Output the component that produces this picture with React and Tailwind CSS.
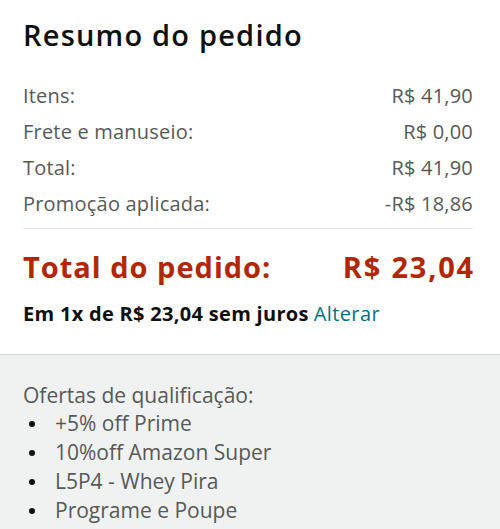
export default function App() {
  const rows = [
    ["Itens:", "R$ 41,90"],
    ["Frete e manuseio:", "R$ 0,00"],
    ["Total:", "R$ 41,90"],
    ["Promoção aplicada:", "-R$ 18,86"],
  ];
  const offers = ["+5% off Prime", "10%off Amazon Super", "L5P4 - Whey Pira", "Programe e Poupe"];
  return (
    <div className="w-[500px] h-[529px] overflow-hidden bg-white font-['Open_Sans','Noto_Sans',sans-serif]">
      <div className="pl-[23px] pr-[27px] pt-[16px] pb-[28px]">
        <h1 className="text-[29px] leading-[38px] font-semibold tracking-[1.2px] text-[#0F1111]">Resumo do pedido</h1>
        <div className="mt-[24px]">
          {rows.map(([l, v]) => (
            <div key={l} className="flex h-[36px] items-center justify-between text-[20px] tracking-[0.2px] text-[#565959]">
              <span>{l}</span>
              <span>{v}</span>
            </div>
          ))}
        </div>
        <div className="mt-[6px] border-t border-[#e3e6e6]" />
        <div className="mt-[18px] flex h-[40px] items-center justify-between text-[29px] font-bold text-[#B12704]">
          <span className="tracking-[1px]">Total do pedido:</span>
          <span className="tracking-[1.8px] -mr-[2px]">R$ 23,04</span>
        </div>
        <div className="mt-[15px] flex h-[24px] items-center text-[20px] text-[#0F1111]">
          <span className="font-bold tracking-[0.3px]">Em 1x de R$ 23,04 sem juros</span>
          <span className="ml-[5px] tracking-[0.4px] text-[#007185]">Alterar</span>
        </div>
      </div>
      <div className="h-full border-t border-[#d5d9d9] bg-[#f0f2f2] pl-[23px] pr-[27px] pt-[26px]">
        <div className="text-[21px] leading-[28px] text-[#565959]">Ofertas de qualificação:</div>
        <ul className="text-[21px] leading-[29px] text-[#565959]">
          {offers.map((o) => (
            <li key={o} className="flex items-center">
              <span className="ml-[6px] mr-[20px] h-[6px] w-[6px] rounded-full bg-[#0F1111]" />
              <span>{o}</span>
            </li>
          ))}
        </ul>
      </div>
    </div>
  );
}
